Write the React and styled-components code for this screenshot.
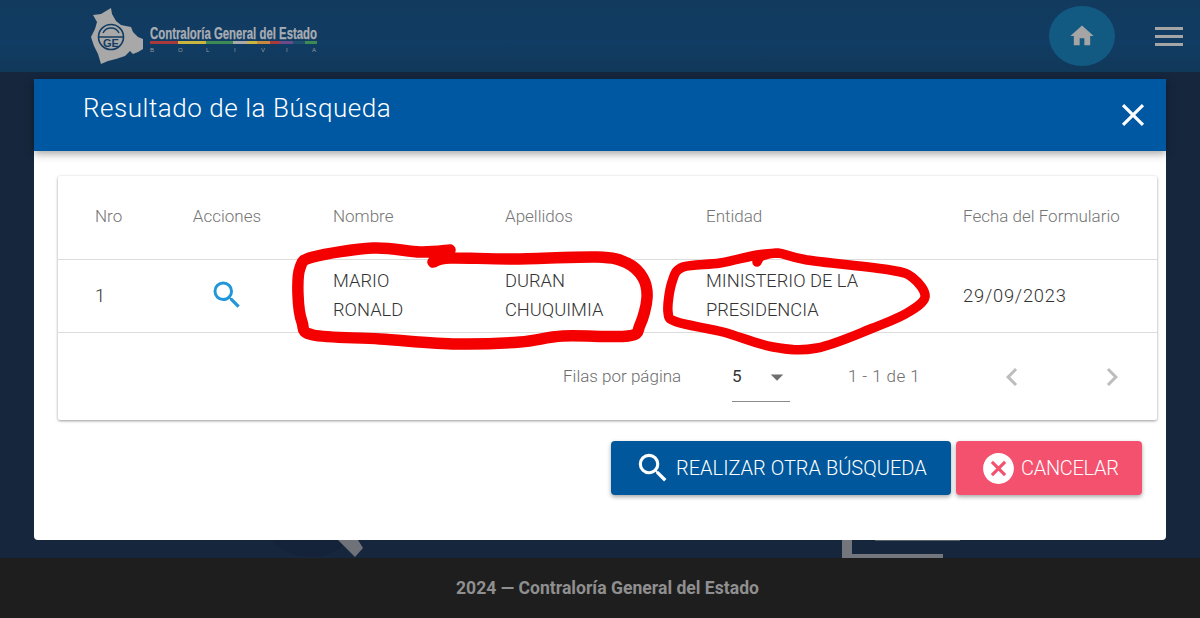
import React from "react";
import styled, { createGlobalStyle } from "styled-components";
import {
  MdHome,
  MdClose,
  MdSearch,
  MdCancel,
  MdChevronLeft,
  MdChevronRight,
  MdArrowDropDown
} from "react-icons/md";

const GlobalStyle = createGlobalStyle`
  html, body {
    margin: 0;
    padding: 0;
    background: #16263c;
  }
  * {
    box-sizing: border-box;
  }
`;

const Page = styled.div`
  position: relative;
  width: 1200px;
  height: 618px;
  overflow: hidden;
  display: flex;
  flex-direction: column;
  font-family: Roboto, "Noto Sans", sans-serif;
`;

const Header = styled.header`
  height: 72px;
  flex: none;
  display: flex;
  align-items: center;
  padding: 0 17px 0 90px;
  background: linear-gradient(180deg, #123a5e, #113c63 60%, #103859);
  box-shadow: 0 2px 5px rgba(0, 0, 0, 0.45);
`;

const LogoArt = styled.svg`
  width: 300px;
  height: 60px;
  flex: none;
`;

const HomeButton = styled.div`
  width: 66px;
  height: 60px;
  margin-left: auto;
  border-radius: 50%;
  background: #135a83;
  color: #a5a5a5;
  display: flex;
  align-items: center;
  justify-content: center;
`;

const MenuButton = styled.div`
  width: 28px;
  margin-left: 40px;
  display: flex;
  flex-direction: column;
  gap: 5px;
`;

const MenuBar = styled.span`
  height: 3px;
  background: #a5a5a5;
`;

const Main = styled.main`
  flex: 1;
  position: relative;
  background: #16263c;
`;

const BackArt = styled.svg`
  position: absolute;
  left: 0;
  top: 0;
  width: 1200px;
  height: 486px;
`;

const Footer = styled.footer`
  height: 60px;
  flex: none;
  background: #1e1e1e;
  color: #8f8f8f;
  font-size: 17.6px;
  font-weight: 700;
  display: flex;
  align-items: center;
  justify-content: center;
  padding-left: 15px;
`;

const Modal = styled.section`
  position: absolute;
  left: 34px;
  top: 79px;
  width: 1132px;
  height: 461px;
  background: #fff;
  border-radius: 0 0 4px 4px;
  display: flex;
  flex-direction: column;
`;

const ModalHead = styled.div`
  height: 72px;
  flex: none;
  background: #0058a2;
  box-shadow: 0 3px 8px rgba(0, 0, 0, 0.35);
  color: #fff;
  display: flex;
  align-items: flex-start;
  justify-content: space-between;
  padding: 12px 14px 0 49px;
`;

const Title = styled.h2`
  margin: 0;
  font-size: 26px;
  line-height: 34px;
  font-weight: 300;
  letter-spacing: 0.54px;
`;

const CloseIcon = styled(MdClose)`
  margin-top: 5px;
`;

const Card = styled.div`
  margin: 25px 9px 0 24px;
  height: 244px;
  background: #fff;
  border-radius: 2px;
  box-shadow: 0 1px 3px rgba(0, 0, 0, 0.4);
`;

const Row = styled.div`
  display: grid;
  grid-template-columns: 100px 138px 172px 201px 257px 231px;
  height: ${(p) => p.$height}px;
  padding-bottom: 2px;
  align-items: center;
  border-bottom: 1px solid #dcdcdc;
  font-size: ${(p) => p.$size}px;
  line-height: 29px;
  font-weight: 300;
  color: ${(p) => p.$color};
`;

const Cell = styled.div`
  padding-left: ${(p) => (p.$center ? 0 : 37)}px;
  text-align: ${(p) => (p.$center ? "center" : "left")};
  white-space: nowrap;
  letter-spacing: ${(p) => p.$spacing || 0}px;
`;

const LinkIcon = styled(MdSearch)`
  display: block;
  margin: 0 auto;
  color: #2196d9;
`;

const Pagination = styled.div`
  height: 87px;
  display: flex;
  align-items: flex-start;
  padding-top: 29px;
  font-size: 17px;
  font-weight: 300;
  line-height: 29px;
  color: #6d6d6d;
`;

const PerPage = styled.span`
  margin-left: 505px;
  width: 169px;
`;

const Select = styled.div`
  width: 58px;
  height: 40px;
  border-bottom: 1px solid #8a8a8a;
  display: flex;
  color: #333;
  font-weight: 400;
  justify-content: space-between;
`;

const DropIcon = styled(MdArrowDropDown)`
  color: #6f6f6f;
  margin-right: -2px;
`;

const Range = styled.span`
  margin-left: 58px;
  width: 71px;
  letter-spacing: 0.4px;
  white-space: nowrap;
`;

const PageIcon = styled.div`
  color: #bdbdbd;
  height: 36px;
  margin-left: ${(p) => p.$left}px;
  margin-top: -3px;
`;

const Actions = styled.div`
  display: flex;
  justify-content: flex-end;
  gap: 5px;
  margin-top: 21px;
  padding-right: 24px;
`;

const Button = styled.button`
  width: ${(p) => p.$width}px;
  height: 54px;
  border: 0;
  border-radius: 4px;
  background: ${(p) => p.$bg};
  color: #fff;
  font-family: inherit;
  font-size: 20px;
  font-weight: 300;
  letter-spacing: ${(p) => p.$spacing || 0}px;
  display: flex;
  align-items: center;
  gap: ${(p) => p.$gap}px;
  padding: 0 0 0 ${(p) => p.$pad}px;
  box-shadow: 0 2px 4px rgba(0, 0, 0, 0.35);
`;

const Scribbles = styled.svg`
  position: absolute;
  left: 0;
  top: 0;
  pointer-events: none;
`;

// catmull-rom through the hand drawn points
function smooth(pts) {
  let d = `M${pts[0][0]} ${pts[0][1]}`;
  for (let i = 0; i < pts.length - 1; i++) {
    const p0 = pts[i - 1] || pts[i];
    const p1 = pts[i];
    const p2 = pts[i + 1];
    const p3 = pts[i + 2] || p2;
    const c1x = p1[0] + (p2[0] - p0[0]) / 6;
    const c1y = p1[1] + (p2[1] - p0[1]) / 6;
    const c2x = p2[0] - (p3[0] - p1[0]) / 6;
    const c2y = p2[1] - (p3[1] - p1[1]) / 6;
    d += ` C${c1x} ${c1y} ${c2x} ${c2y} ${p2[0]} ${p2[1]}`;
  }
  return d;
}

const firstLoop = [
  [433, 262], [450, 258], [513, 259], [597, 257], [627, 263], [643, 278], [647, 298],
  [640, 325], [628, 336], [563, 336], [520, 342], [457, 344], [380, 339], [313, 335],
  [302, 322], [298, 295], [300, 268], [313, 257], [373, 248], [420, 252], [450, 250]
];

const secondLoop = [
  [757, 262], [762, 256], [778, 253], [807, 260], [890, 270], [913, 278], [925, 297],
  [907, 313], [873, 328], [817, 348], [773, 347], [723, 332], [677, 322], [668, 312],
  [672, 282], [683, 267], [720, 263], [757, 255], [778, 253]
];

const stripes = [
  [150, 28, "#a83a3d"], [178, 28, "#c9b640"], [206, 27, "#3d8a55"], [233, 14, "#a9a9a9"],
  [247, 10, "#c9b640"], [257, 13, "#c8893c"], [270, 10, "#a83a3d"], [280, 13, "#6a4a8a"],
  [293, 12, "#1f4f6f"], [305, 12, "#3d8a55"]
];

function Logo() {
  // drawn in page coordinates, svg sits at x 90 y 6
  return (
    <LogoArt viewBox="90 6 300 60">
      <path
        d="M93 15 L101 14 L111 8 L112 14 L116 21 L121 25 L131 27 L133 32 L138 37 L143 39 L143 49 L138 52 L133 54 L130 51 L125 56 L116 59 L108 61 L101 64 L98 54 L94 46 L91 37 L95 29 L97 22 Z"
        fill="#a8a8a8"
      />
      <circle cx="111" cy="37" r="12.5" fill="none" stroke="#123c62" strokeWidth="1.6" />
      <path d="M99 37 H123 M103 33 A9 9 0 0 1 119 33" fill="none" stroke="#123c62" strokeWidth="1.5" />
      <text x="103" y="47" fontFamily="Liberation Sans" fontSize="10" fontWeight="700" fill="#123c62" textLength="16" lengthAdjust="spacingAndGlyphs">GE</text>
      <text
        x="150"
        y="39"
        fontFamily="Liberation Sans"
        fontSize="16"
        fontWeight="700"
        fill="#a9adb3"
        stroke="#a9adb3"
        strokeWidth="0.25"
        textLength="167"
        lengthAdjust="spacingAndGlyphs"
      >
        Contraloría General del Estado
      </text>
      {stripes.map((s) => (
        <rect key={s[0]} x={s[0]} y="41" width={s[1]} height="3" fill={s[2]} />
      ))}
      <text
        x="150 178 206 234 261 286 312"
        y="52"
        fontFamily="Liberation Sans"
        fontSize="6"
        fill="#9a9a9a"
      >
        BOLIVIA
      </text>
    </LogoArt>
  );
}

export default function App() {
  return (
    <Page>
      <GlobalStyle />
      <Header>
        <Logo />
        <HomeButton>
          <MdHome size={28} />
        </HomeButton>
        <MenuButton>
          <MenuBar />
          <MenuBar />
          <MenuBar />
        </MenuButton>
      </Header>
      <Main>
        <BackArt viewBox="0 72 1200 486">
          <circle cx="310" cy="505" r="52" fill="#14223a" />
          <path d="M338 540 L358 540 L363 548 L355 557 Z" fill="#6f7379" />
          <path d="M842 535 V558 H943 V554 H852 V535 Z" fill="#73767c" />
          <path d="M875 538 H960 V541 H875 Z" fill="#5a5e66" />
        </BackArt>
      </Main>
      <Footer>2024 — Contraloría General del Estado</Footer>
      <Modal>
        <ModalHead>
          <Title>Resultado de la Búsqueda</Title>
          <CloseIcon size={38} />
        </ModalHead>
        <Card>
          <Row $height={84} $size={17} $color="#757575">
            <Cell>Nro</Cell>
            <Cell $center>Acciones</Cell>
            <Cell>Nombre</Cell>
            <Cell>Apellidos</Cell>
            <Cell>Entidad</Cell>
            <Cell>Fecha del Formulario</Cell>
          </Row>
          <Row $height={73} $size={18.3} $color="#333">
            <Cell>1</Cell>
            <Cell $center>
              <LinkIcon size={36} />
            </Cell>
            <Cell>
              MARIO
              <br />
              RONALD
            </Cell>
            <Cell>
              DURAN
              <br />
              CHUQUIMIA
            </Cell>
            <Cell>
              MINISTERIO DE LA
              <br />
              PRESIDENCIA
            </Cell>
            <Cell $spacing={0.8}>29/09/2023</Cell>
          </Row>
          <Pagination>
            <PerPage>Filas por página</PerPage>
            <Select>
              5
              <DropIcon size={30} />
            </Select>
            <Range>1 - 1 de 1</Range>
            <PageIcon $left={75}>
              <MdChevronLeft size={36} />
            </PageIcon>
            <PageIcon $left={64}>
              <MdChevronRight size={36} />
            </PageIcon>
          </Pagination>
        </Card>
        <Actions>
          <Button $width={340} $bg="#00579b" $gap={4} $pad={23}>
            <MdSearch size={38} />
            REALIZAR OTRA BÚSQUEDA
          </Button>
          <Button $width={186} $bg="#f4516f" $gap={4} $pad={24} $spacing={-0.3}>
            <MdCancel size={37} />
            CANCELAR
          </Button>
        </Actions>
      </Modal>
      <Scribbles width="1200" height="618" viewBox="0 0 1200 618">
        <path d={smooth(firstLoop)} fill="none" stroke="#f50000" strokeWidth="11.5" strokeLinecap="round" strokeLinejoin="round" />
        <path d={smooth(secondLoop)} fill="none" stroke="#f50000" strokeWidth="9.5" strokeLinecap="round" strokeLinejoin="round" />
      </Scribbles>
    </Page>
  );
}
